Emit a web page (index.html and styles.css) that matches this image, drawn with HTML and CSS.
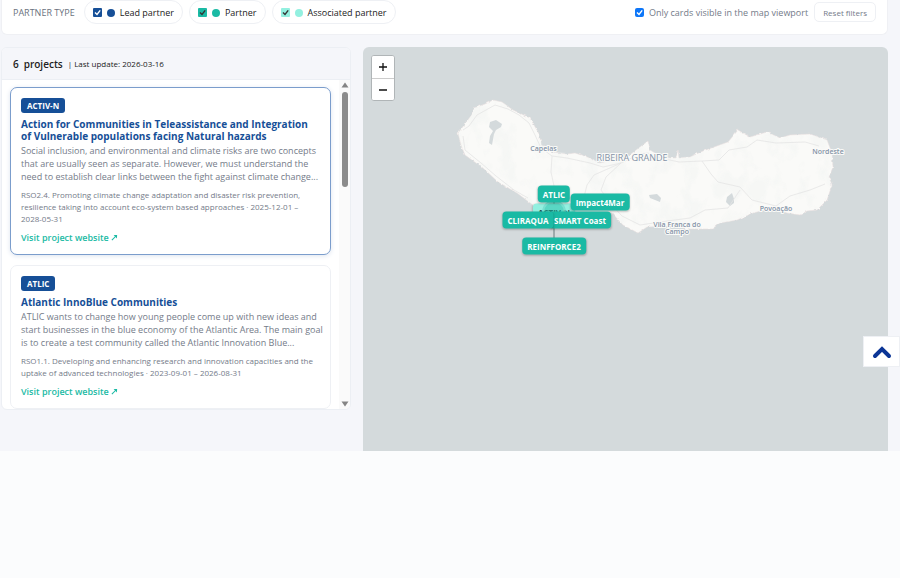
FILE: index.html
```html
<!DOCTYPE html>
<html lang="en">
<head>
<meta charset="utf-8">
<meta name="viewport" content="width=device-width, initial-scale=1">
<title>Projects map</title>
<link rel="stylesheet" href="styles.css">
</head>
<body>
<main class="explorer">
  <form class="filters">
    <span class="filters-label">PARTNER TYPE</span>
    <label class="pill"><input class="check check-lead" type="checkbox" checked><span class="dot dot-lead"></span>Lead partner</label>
    <label class="pill"><input class="check check-partner" type="checkbox" checked><span class="dot dot-partner"></span>Partner</label>
    <label class="pill"><input class="check check-assoc" type="checkbox" checked><span class="dot dot-assoc"></span>Associated partner</label>
    <label class="viewport-only"><input class="check check-view" type="checkbox" checked>Only cards visible in the map viewport</label>
    <button class="reset" type="button">Reset filters</button>
  </form>

  <div class="columns">
    <section class="panel">
      <header class="panel-head"><strong class="count">6</strong><strong>projects</strong><span class="updated">| Last update: 2026-03-16</span></header>
      <div class="panel-body">
        <div class="cards">
          <article class="card card-active">
            <span class="badge">ACTIV-N</span>
            <h2 class="title">Action for Communities in Teleassistance and Integration<br>of Vulnerable populations facing Natural hazards</h2>
            <p class="summary">Social inclusion, and environmental and climate risks are two concepts<br>that are usually seen as separate. However, we must understand the<br>need to establish clear links between the fight against climate change...</p>
            <p class="meta">RSO2.4. Promoting climate change adaptation and disaster risk prevention,<br>resilience taking into account eco-system based approaches · 2025-12-01 –<br>2028-05-31</p>
            <a class="visit" href="#activ-n">Visit project website <svg class="out" viewBox="0 0 8 8" aria-hidden="true"><path d="M1 7 6 2"/><path class="out-head" d="M3 1.2 7 1 6.800 5Z"/></svg></a>
          </article>
          <article class="card">
            <span class="badge">ATLIC</span>
            <h2 class="title">Atlantic InnoBlue Communities</h2>
            <p class="summary">ATLIC wants to change how young people come up with new ideas and<br>start businesses in the blue economy of the Atlantic Area. The main goal<br>is to create a test community called the Atlantic Innovation Blue...</p>
            <p class="meta">RSO1.1. Developing and enhancing research and innovation capacities and the<br>uptake of advanced technologies · 2023-09-01 – 2026-08-31</p>
            <a class="visit" href="#atlic">Visit project website <svg class="out" viewBox="0 0 8 8" aria-hidden="true"><path d="M1 7 6 2"/><path class="out-head" d="M3 1.2 7 1 6.800 5Z"/></svg></a>
          </article>
        </div>
        <div class="scrollbar" aria-hidden="true">
          <svg class="arrow" viewBox="0 0 8 6"><path d="M4 0.500 7.500 5.500H0.500Z"/></svg>
          <span class="thumb"></span>
          <svg class="arrow arrow-down" viewBox="0 0 8 6"><path d="M4 5.500 7.500 0.500H0.500Z"/></svg>
        </div>
      </div>
    </section>

    <section class="map" aria-label="Map">
      <svg class="island" viewBox="363 47 525 404" preserveAspectRatio="xMinYMin slice">
        <defs>
          <filter id="rough" x="-2%" y="-5%" width="104%" height="110%"><feTurbulence type="fractalNoise" baseFrequency="0.25" numOctaves="2" seed="4" result="n"/><feDisplacementMap in="SourceGraphic" in2="n" scale="3" xChannelSelector="R" yChannelSelector="G"/></filter>
          <filter id="relief" x="0" y="0" width="100%" height="100%"><feTurbulence type="fractalNoise" baseFrequency="0.06 0.04" numOctaves="3" seed="8"/><feColorMatrix values="0 0 0 0 0.88  0 0 0 0 0.905  0 0 0 0 0.89  0 5 0 0 -2.5"/></filter>
          <clipPath id="coast"><path d="M493 100 485 104 474 108 473 113 465 124 458 133 461 145 465 155 483 168 498 182 517 193 533 205 560 222 600 215 612 213 623 225 638 233 647 227 670 226 690 229 712 229 720 223 737 220 753 213 773 208 787 213 800 215 807 211 817 210 827 200 832 185 829 177 833 167 832 153 827 140 810 134 790 135 780 138 767 132 750 137 738 131 728 142 703 151 690 157 668 158 655 153 650 150 648 142 640 147 627 157 600 163 587 157 575 153 553 152 542 145 538 132 530 118 513 110 502 102Z"/></clipPath>
        </defs>
        <path class="land" filter="url(#rough)" d="M493 100 485 104 474 108 473 113 465 124 458 133 461 145 465 155 483 168 498 182 517 193 533 205 560 222 600 215 612 213 623 225 638 233 647 227 670 226 690 229 712 229 720 223 737 220 753 213 773 208 787 213 800 215 807 211 817 210 827 200 832 185 829 177 833 167 832 153 827 140 810 134 790 135 780 138 767 132 750 137 738 130 728 142 703 151 690 157 679 158 678 151 676 158 668 158 655 153 650 150 648 141 640 147 627 157 600 163 587 157 575 153 567 154 553 152 542 145 538 132 530 118 513 110 502 102Z"/>
        <g clip-path="url(#coast)"><rect class="relief" x="455" y="98" width="382" height="138" filter="url(#relief)"/></g>
        <path class="lake" d="M490 122 496 120 502 124 501 127 496 130 494 134 492 145 489 143 490 136 493 131 489 127Z"/>
        <path class="lake" d="M649 195 657 194 661 198 660 202 655 200 650 198Z"/>
        <path class="lake" d="M727 197 732 193 734 199 734 203 730 206 726 202Z"/>
        <path class="road" d="M463 130 469 126 477 115 486 110 495 105 508 109 519 115 529 123 535 135 541 148 552 156 567 158 590 163 603 167 621 163 640 154 648 153 656 157 679 162 702 161 719 160 729 150 747 147 757 140 776 143 805 142 819 146M463 136 465 150 481 163 496 176 514 190 528 198M552 156 551 172 554 186M621 163 606 177 601 190 610 203 622 216 640 225M621 163 594 175 587 185 584 197M702 161 711 174 718 182 740 187 752 200 776 206 790 196 810 190 825 184M640 225 660 222 690 218 705 210 728 208 740 190"/>
        <g class="places">
          <text x="543.5" y="151">Capelas</text>
          <text class="city" x="632" y="161">RIBEIRA GRANDE</text>
          <text x="828" y="154">Nordeste</text>
          <text x="776" y="211">Povoação</text>
          <text x="677" y="227">Vila Franca do</text>
          <text x="677" y="234">Campo</text>
        </g>
        <path class="spoke" d="M554 200V240"/>
      </svg>
      <span class="pin pin-activ">ACTIV-N</span>
      <span class="cluster"></span>
      <span class="pin pin-impact">Impact4Mar</span>
      <span class="pin pin-atlic">ATLIC</span>
      <span class="pin pin-smart">SMART Coast</span>
      <span class="pin pin-cliraqua">CLIRAQUA</span>
      <span class="pin pin-reinf">REINFFORCE2</span>
      <div class="zoomer">
        <button type="button" aria-label="Zoom in"><svg viewBox="0 0 10 10"><path d="M5 1V9M1 5H9"/></svg></button>
        <button type="button" aria-label="Zoom out"><svg viewBox="0 0 10 10"><path d="M1 5H9"/></svg></button>
      </div>
    </section>
  </div>
</main>
<button class="to-top" type="button" aria-label="Back to top"><svg viewBox="0 0 20 14"><path d="M3 11 10 4 17 11"/></svg></button>
</body>
</html>
```
FILE: styles.css
```css
* { box-sizing: border-box; }

body {
  margin: 0;
  background: #fbfcfd;
  color: #222;
  font-family: "Open Sans", "Noto Sans", sans-serif;
  font-size: 10px;
}

h2, p { margin: 0; }

button { font-family: inherit; }

.explorer {
  padding: 0 12px 0 1px;
  background: #f5f6fa;
}

.filters {
  display: flex;
  align-items: center;
  gap: 6px;
  padding: 0 11px 10px;
  background: #fff;
  border: 1px solid #eff0f4;
  border-top: 0;
  border-radius: 0 0 6px 6px;
  font-size: 9px;
}

.filters-label {
  margin-right: 3px;
  color: #6b7280;
}

.pill {
  display: flex;
  align-items: center;
  height: 24px;
  padding: 0 8px;
  border: 1px solid #eef0f4;
  border-radius: 12px;
}

.check {
  appearance: none;
  width: 9px;
  height: 9px;
  margin: 0;
  border-radius: 1px;
  background: center / 9px 9px no-repeat;
}

.check-lead, .check-view {
  background-image: url("data:image/svg+xml,%3Csvg xmlns='http://www.w3.org/2000/svg' viewBox='0 0 9 9'%3E%3Cpath d='M2 4.500 4 6.500 7.200 2.300' fill='none' stroke='white' stroke-width='1.400'/%3E%3C/svg%3E");
}

.check-partner, .check-assoc {
  background-image: url("data:image/svg+xml,%3Csvg xmlns='http://www.w3.org/2000/svg' viewBox='0 0 9 9'%3E%3Cpath d='M2 4.500 4 6.500 7.200 2.300' fill='none' stroke='%23333' stroke-width='1.400'/%3E%3C/svg%3E");
}

.check-lead { background-color: #164f97; }
.check-partner { background-color: #1abaa4; }
.check-assoc { background-color: #93f0e0; }
.check-view { background-color: #0d76f8; border-radius: 2px; }

.dot {
  width: 8px;
  height: 8px;
  margin: 2px 5px 0;
  border-radius: 50%;
}

.dot-lead { background: #164f97; }
.dot-partner { background: #1abaa4; }
.dot-assoc { background: #93f0e0; }

.viewport-only {
  display: flex;
  align-items: center;
  gap: 5px;
  margin-left: auto;
  color: #747b89;
}

.reset {
  height: 20px;
  padding: 0 8px;
  border: 1px solid #eef0f4;
  border-radius: 5px;
  background: #fff;
  color: #747b89;
  font-size: 8px;
}

.columns {
  display: grid;
  grid-template-columns: 2fr 3fr;
  gap: 12px;
  padding-top: 12px;
  align-items: start;
}

.panel {
  overflow: hidden;
  border: 1px solid #eceff4;
  border-radius: 6px;
  background: #fff;
}

.panel-head {
  display: flex;
  align-items: center;
  gap: 5px;
  height: 32px;
  padding: 0 11px;
  border-bottom: 1px solid #eceff4;
  background: #f5f6fa;
}

.panel-head strong { font-weight: 600; }

.updated { font-size: 8px; }

.panel-body {
  display: flex;
  max-height: 329px;
}

.cards {
  display: flex;
  flex: 1;
  flex-direction: column;
  gap: 10px;
  min-width: 0;
  padding: 7px 8px 0;
}

.card {
  flex: none;
  padding: 10px;
  border: 1px solid #eef0f4;
  border-radius: 7px;
  background: #fff;
  white-space: nowrap;
}

.card-active {
  border-color: #7b9dcc;
  box-shadow: 0 1px 5px #dde4ef;
}

.badge {
  display: block;
  width: fit-content;
  padding: 0 6px;
  border-radius: 3px;
  background: #164f97;
  color: #fff;
  font-size: 8px;
  font-weight: 700;
  line-height: 15px;
}

.title {
  margin-top: 5px;
  color: #164f97;
  font-size: 10px;
  font-weight: 700;
  line-height: 12px;
}

.summary {
  margin-top: 2px;
  color: #747b89;
  font-size: 9px;
  line-height: 13px;
}

.meta {
  margin-top: 6px;
  color: #747b89;
  font-size: 8px;
  line-height: 12px;
}

.visit {
  display: block;
  margin-top: 6px;
  color: #1abaa4;
  font-size: 9px;
  font-weight: 600;
  line-height: 13px;
  text-decoration: none;
}

.out {
  width: 7px;
  height: 7px;
  fill: none;
  stroke: #1abaa4;
  stroke-width: 1.2;
}

.out-head { fill: #1abaa4; stroke: none; }

.scrollbar {
  display: flex;
  flex-direction: column;
  align-items: center;
  gap: 4px;
  width: 11px;
  padding: 2px 0;
  background: #fafafa;
}

.arrow {
  width: 8px;
  height: 6px;
  fill: #858585;
}

.arrow-down { margin-top: auto; }

.thumb {
  width: 6px;
  height: 95px;
  border-radius: 3px;
  background: #8b8b8b;
}

.map {
  position: relative;
  overflow: hidden;
  min-width: 0;
  border-radius: 6px 6px 0 0;
  background: #d4dadc;
}

.island { display: block; width: 100%; }
.land { fill: #fafaf8; stroke: #eadfdf; stroke-width: 0.5; }
.relief { opacity: 0.5; }
.lake { fill: #d4dadc; }
.road { fill: none; stroke: #e4e5e5; stroke-width: 0.8; }
.spoke { stroke: #697b7d; stroke-width: 1; }

.places {
  fill: #8493a7;
  stroke: #fafaf8;
  stroke-width: 2px;
  paint-order: stroke;
  font-size: 7px;
  font-weight: 600;
  text-anchor: middle;
}

.city { font-size: 9px; font-weight: 400; }

.pin {
  position: absolute;
  transform: translate(-50%, -50%);
  padding: 0 5px;
  border-radius: 4px;
  background: #1abaa4;
  box-shadow: 0 1px 2px #0003;
  color: #fff;
  font-size: 8px;
  font-weight: 700;
  line-height: 17px;
  white-space: nowrap;
}

.pin-activ { left: 191px; top: 165px; background: #93f0e0; color: #24504c; }
.pin-impact { left: 237px; top: 155px; }
.pin-atlic { left: 191px; top: 147px; }
.pin-smart { left: 217px; top: 173px; }
.pin-cliraqua { left: 165px; top: 173px; }
.pin-reinf { left: 191px; top: 199px; }

.cluster {
  position: absolute;
  left: 179px;
  top: 153px;
  width: 24px;
  height: 24px;
  border: 2px solid #8de4d899;
  border-radius: 50%;
  background: #1abaa477;
}

.zoomer {
  position: absolute;
  left: 8px;
  top: 8px;
  display: grid;
  overflow: hidden;
  border: 1px solid #b0b5b7;
  border-radius: 3px;
  background: #fff;
}

.zoomer button {
  display: grid;
  place-items: center;
  width: 22px;
  height: 22px;
  padding: 0;
  border: 0;
  background: #fff;
}

.zoomer button + button { border-top: 1px solid #ccc; }

.zoomer svg {
  width: 10px;
  height: 10px;
  stroke: #111;
  stroke-width: 1.3;
}

.to-top {
  position: fixed;
  right: 0;
  top: 336px;
  display: grid;
  place-items: center;
  width: 37px;
  height: 31px;
  padding: 0;
  border: 1px solid #eef0f4;
  background: #fff;
}

.to-top svg {
  width: 20px;
  height: 14px;
  fill: none;
  stroke: #0b3596;
  stroke-width: 4;
  stroke-linecap: round;
}
```
